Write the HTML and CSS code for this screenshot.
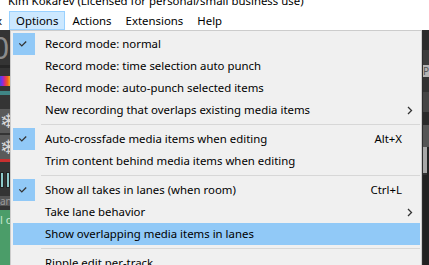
FILE: index.html
```html
<!DOCTYPE html>
<html>
<head>
    <title>Options menu</title>
    <meta name="viewport" content="width=device-width, initial-scale=1.0">
    <link rel="stylesheet" href="styles.css">
</head>
<body>
    <div class="titlebar"><span class="title">Kim Kokarev (Licensed for personal/small business use)</span></div>

    <!-- Menu bar -->
    <nav class="menubar">
        <span class="menubar-item cut">x</span>
        <span class="menubar-item open">Options</span>
        <span class="menubar-item">Actions</span>
        <span class="menubar-item">Extensions</span>
        <span class="menubar-item">Help</span>
    </nav>

    <div class="workspace">
        <!-- Track panel peeking out on the left -->
        <div class="tcp-strip">
            <div class="tcp-time">0</div>
            <div class="tcp-line"></div>
            <div class="tcp-gap"></div>
            <div class="tcp-rainbow"></div>
            <div class="tcp-gap small"></div>
            <div class="tcp-teal"></div>
            <div class="tcp-gap tall"></div>
            <div class="tcp-snow">&#x2744;&#xFE0E;</div>
            <div class="tcp-snow red">&#x2744;&#xFE0E;</div>
            <div class="tcp-gap"></div>
            <div class="tcp-buttons"><span></span><span></span></div>
            <div class="tcp-gap"></div>
            <div class="tcp-label">an</div>
            <div class="tcp-track">l o</div>
        </div>

        <div class="arrange"></div>

        <!-- Mixer panel peeking out on the right -->
        <div class="mixer-strip">
            <div class="mx-a"></div>
            <div class="mx-b"></div>
            <div class="mx-name">PE</div>
            <div class="mx-c"></div>
            <div class="mx-d"></div>
            <div class="mx-e"></div>
            <div class="mx-f"></div>
            <div class="mx-scroll"></div>
            <div class="mx-rest"></div>
        </div>

        <!-- Options dropdown -->
        <div class="dropdown">
            <div class="item checked">
                <span class="check"><svg width="22" height="22" viewBox="0 0 22 22"><path d="M6.3 10.4 L8.8 12.9 L13.2 8.5" /></svg></span>
                <span class="label">Record mode: normal</span>
            </div>
            <div class="item">
                <span class="check"></span>
                <span class="label">Record mode: time selection auto punch</span>
            </div>
            <div class="item">
                <span class="check"></span>
                <span class="label">Record mode: auto-punch selected items</span>
            </div>
            <div class="item">
                <span class="check"></span>
                <span class="label">New recording that overlaps existing media items</span>
                <span class="key"></span>
                <span class="sub"><svg width="6" height="9" viewBox="0 0 6 9"><path d="M1 1 L4.5 4.5 L1 8" /></svg></span>
            </div>
            <div class="sep"></div>
            <div class="item checked">
                <span class="check"><svg width="22" height="22" viewBox="0 0 22 22"><path d="M6.3 10.4 L8.8 12.9 L13.2 8.5" /></svg></span>
                <span class="label">Auto-crossfade media items when editing</span>
                <span class="key">Alt+X</span>
            </div>
            <div class="item">
                <span class="check"></span>
                <span class="label">Trim content behind media items when editing</span>
            </div>
            <div class="sep"></div>
            <div class="item checked">
                <span class="check"><svg width="22" height="22" viewBox="0 0 22 22"><path d="M6.3 10.4 L8.8 12.9 L13.2 8.5" /></svg></span>
                <span class="label">Show all takes in lanes (when room)</span>
                <span class="key">Ctrl+L</span>
            </div>
            <div class="item">
                <span class="check"></span>
                <span class="label">Take lane behavior</span>
                <span class="key"></span>
                <span class="sub"><svg width="6" height="9" viewBox="0 0 6 9"><path d="M1 1 L4.5 4.5 L1 8" /></svg></span>
            </div>
            <div class="item hover">
                <span class="check"></span>
                <span class="label">Show overlapping media items in lanes</span>
            </div>
            <div class="sep"></div>
            <div class="item">
                <span class="check"></span>
                <span class="label">Ripple edit per-track</span>
            </div>
        </div>
    </div>
</body>
</html>
```

FILE: styles.css
```css
body {
    margin: 0;
    width: 429px;
    height: 265px;
    overflow: hidden;
    background: #fff;
    font-family: 'Noto Sans', sans-serif;
    font-size: 11.4px;
    color: #000;
}

/* Title + menu bar */
.titlebar {
    height: 11px;
    overflow: hidden;
    padding-left: 8px;
}

.title {
    display: block;
    line-height: 12px;
    margin-top: -5px;
}

.menubar {
    display: flex;
    height: 19px;
}

.menubar-item {
    display: flex;
    align-items: center;
    padding: 0 6px;
    border: 1px solid transparent;
}

.menubar-item.cut {
    margin-left: -11px;
}

.menubar-item.open {
    background: #cce8ff;
    border-color: #99d1ff;
}

/* Workspace behind the menu */
.workspace {
    position: relative;
    display: flex;
    height: 235px;
}

.arrange {
    flex: 1;
    background: #2d2d2d;
}

.tcp-strip {
    width: 10px;
    background: #343434;
    display: flex;
    flex-direction: column;
    overflow: hidden;
}

.tcp-time {
    height: 34px;
    font-size: 30px;
    line-height: 34px;
    color: #8c8c8c;
    margin-left: -8px;
    margin-top: 1px;
}

.tcp-line { height: 3px; background: #262626; }
.tcp-gap { height: 8px; }
.tcp-gap.small { height: 5px; }
.tcp-gap.tall { height: 14px; }

.tcp-rainbow {
    height: 10px;
    background: linear-gradient(90deg, #3b52e0, #8a2be2, #e0306a, #f06020, #f0b020);
}

.tcp-teal { height: 4px; background: #3f8585; }

.tcp-snow {
    height: 24px;
    background: #5a5a5a;
    color: #d8d8d8;
    font-family: 'DejaVu Sans', sans-serif;
    font-size: 20px;
    line-height: 24px;
    margin-bottom: 2px;
    overflow: hidden;
}

.tcp-snow.red {
    border-bottom: 3px solid #c83030;
}

.tcp-buttons {
    display: flex;
    gap: 2px;
    height: 16px;
}

.tcp-buttons span {
    width: 4px;
    background: #8ec9c9;
    border: 1px solid #222;
}

.tcp-label {
    height: 10px;
    background: #555;
    color: #9a9a9a;
    font-size: 10px;
    line-height: 10px;
    margin-bottom: 4px;
}

.tcp-track {
    flex: 1;
    background: #4b9d69;
    color: #c8e8d0;
    font-size: 11px;
    padding-top: 2px;
    white-space: nowrap;
}

.mixer-strip {
    width: 6px;
    display: flex;
    flex-direction: column;
    background: #222;
}

.mx-a { height: 20px; background: #2b2b2b; }
.mx-b { height: 15px; background: #3c3c3c; }
.mx-name {
    height: 12px;
    background: #b4b4b4;
    color: #555;
    font-size: 10px;
    line-height: 12px;
    overflow: hidden;
}
.mx-c { height: 15px; background: #323232; }
.mx-d { height: 20px; background: #454545; }
.mx-e { height: 13px; background: #2a2a2a; }
.mx-f { height: 22px; background: #555; }
.mx-scroll {
    height: 26px;
    width: 4px;
    background: #a8a8a8;
    border-bottom: 2px solid #333;
}
.mx-rest { flex: 1; background: #222; }

/* Dropdown */
.dropdown {
    position: absolute;
    top: 0;
    left: 10px;
    width: 412px;
    box-sizing: border-box;
    background: #f0f0f0;
    border: 1px solid #cccccc;
    padding: 2px 1px 2px 2px;
}

.item {
    display: grid;
    grid-template-columns: 22px 1fr auto 18px;
    align-items: center;
    height: 22px;
    white-space: nowrap;
}

.item .label {
    padding-left: 10px;
    margin-top: -1px;
}

.item .key {
    text-align: right;
    margin-top: -1px;
}

.item.hover {
    background: #91c9f7;
}

.item.checked .check {
    background: #91c9f7;
}

.check {
    width: 22px;
    height: 22px;
}

.check svg {
    display: block;
}

.check path,
.sub path {
    fill: none;
    stroke: #333;
    stroke-width: 1.3;
}

.sub {
    display: flex;
    padding-left: 5px;
}

.sep {
    height: 1px;
    background: #d7d7d7;
    margin: 3px 0 3px 28px;
}
```
